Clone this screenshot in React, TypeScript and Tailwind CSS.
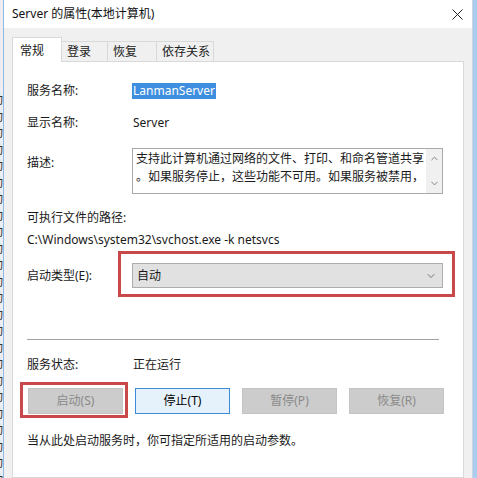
import { ChevronDown, ChevronUp } from 'lucide-react';

const font = { fontFamily: '"Noto Sans", "Noto Sans CJK SC", sans-serif' };

const tabs = ['常规', '登录', '恢复', '依存关系'];
const tabWidths = ['w-[50px]', 'w-[46px]', 'w-[49px]', 'w-[57px]'];

function Row({ label, children, className }: { label: string; children?: React.ReactNode; className: string }) {
  return (
    <div className={`flex items-center ${className}`}>
      <div className="w-[106px] shrink-0">{label}</div>
      {children}
    </div>
  );
}

function Btn({ label, active }: { label: string; active?: boolean }) {
  return (
    <div
      className={[
        'w-[95px] h-[26px] flex items-center justify-center border',
        active ? 'bg-[#e5f1fb] border-[#3c8ad8] text-black' : 'bg-[#cccccc] border-[#c4c4c4] text-[#8a8a8a]',
      ].join(' ')}
    >
      {label}
    </div>
  );
}

export default function App() {
  return (
    <div className="w-[477px] h-[478px] overflow-hidden flex text-[12px] text-[#1a1a1a] bg-[#f0f0f0]" style={font}>
      {/* window behind, left edge */}
      <div className="w-[3px] shrink-0 overflow-hidden bg-[#eceef1]">
        <div className="-ml-[9px] pt-[92px] text-[12px] leading-[16.5px] text-[#333]">
          {Array.from({ length: 24 }).map((_, i) => (
            <div key={i}>动</div>
          ))}
        </div>
      </div>
      <div className="w-[1px] shrink-0 bg-[#8fb8e4]" />

      {/* dialog */}
      <div className="flex-1 flex flex-col">
        <div className="h-[28px] bg-white flex items-center justify-between pl-[8px] pr-[8px]">
          <span className="text-[12px] text-[#111]">Server 的属性(本地计算机)</span>
          <svg width="11" height="11" viewBox="0 0 11 11" className="mr-[1px]">
            <path d="M0.5 0.5 L10.5 10.5 M10.5 0.5 L0.5 10.5" stroke="#222" strokeWidth="1" />
          </svg>
        </div>

        <div className="flex-1 bg-[#f0f0f0] pl-[8px] pr-[8px] pt-[9px] flex flex-col">
          {/* tabs */}
          <div className="flex items-end h-[25px] relative z-10">
            {tabs.map((t, i) =>
              i === 0 ? (
                <div
                  key={t}
                  className={`${tabWidths[i]} h-[25px] bg-white border border-b-0 border-[#d9d9d9] pl-[7px] pt-[4px]`}
                >
                  {t}
                </div>
              ) : (
                <div
                  key={t}
                  className={`${tabWidths[i]} h-[21px] border-t border-r border-[#d9d9d9] pl-[5px] pt-[1px] text-[#222]`}
                >
                  {t}
                </div>
              ),
            )}
          </div>

          {/* panel */}
          <div className="flex-1 bg-white border border-[#d9d9d9] -mt-[1px] pl-[14px] flex flex-col">
            <Row label="服务名称:" className="mt-[21px] h-[16px]">
              <span className="bg-[#3f8fe0] text-white leading-[16px] px-[1px] -ml-[1px]">LanmanServer</span>
            </Row>

            <Row label="显示名称:" className="mt-[16px] h-[16px]">
              <span>Server</span>
            </Row>

            <div className="mt-[17px] flex">
              <div className="w-[105px] shrink-0 pt-[6px]">描述:</div>
              <div className="w-[311px] h-[46px] border border-[#a9a9a9] flex">
                <div className="flex-1 pl-[3px] pt-[1px] leading-[18px] overflow-hidden whitespace-nowrap">
                  <div>支持此计算机通过网络的文件、打印、和命名管道共享</div>
                  <div>。如果服务停止，这些功能不可用。如果服务被禁用，</div>
                </div>
                <div className="w-[16px] bg-[#f0f0f0] flex flex-col items-center justify-between py-[4px] text-[#606060]">
                  <ChevronUp size={11} strokeWidth={1.6} />
                  <ChevronDown size={11} strokeWidth={1.6} />
                </div>
              </div>
            </div>

            <div className="mt-[16px] h-[16px] leading-[16px]">可执行文件的路径:</div>
            <div className="mt-[6px] h-[16px] leading-[16px]">C:\Windows\system32\svchost.exe -k netsvcs</div>

            <div className="mt-[15px] flex items-center">
              <div className="w-[105px] shrink-0">启动类型(E):</div>
              <div className="relative w-[311px] h-[25px]">
                <div className="w-full h-full bg-[#e1e1e1] border border-[#adadad] flex items-center justify-between pl-[4px] pr-[5px]">
                  <span>自动</span>
                  <ChevronDown size={12} strokeWidth={1.4} className="text-[#444]" />
                </div>
                <div className="absolute -left-[14px] -right-[12px] -top-[12px] -bottom-[9px] border-[3px] border-[#c9494b]" />
              </div>
            </div>

            <div className="mt-[51px] w-[412px] h-[1px] bg-[#a0a0a0]" />

            <Row label="服务状态:" className="mt-[17px] h-[16px]">
              <span>正在运行</span>
            </Row>

            <div className="mt-[15px] flex gap-[12px] pl-[1px]">
              <div className="relative">
                <Btn label="启动(S)" />
                <div className="absolute -left-[8px] -right-[5px] -top-[6px] -bottom-[4px] border-[3px] border-[#c9494b]" />
              </div>
              <Btn label="停止(T)" active />
              <Btn label="暂停(P)" />
              <Btn label="恢复(R)" />
            </div>

            <div className="mt-[19px] h-[16px] leading-[16px]">当从此处启动服务时，你可指定所适用的启动参数。</div>
          </div>
        </div>
      </div>

      {/* window behind, right edge */}
      <div className="w-[1px] shrink-0 bg-[#c9d5e2]" />
      <div className="w-[4px] shrink-0 bg-[#a9ccef]" />
    </div>
  );
}
